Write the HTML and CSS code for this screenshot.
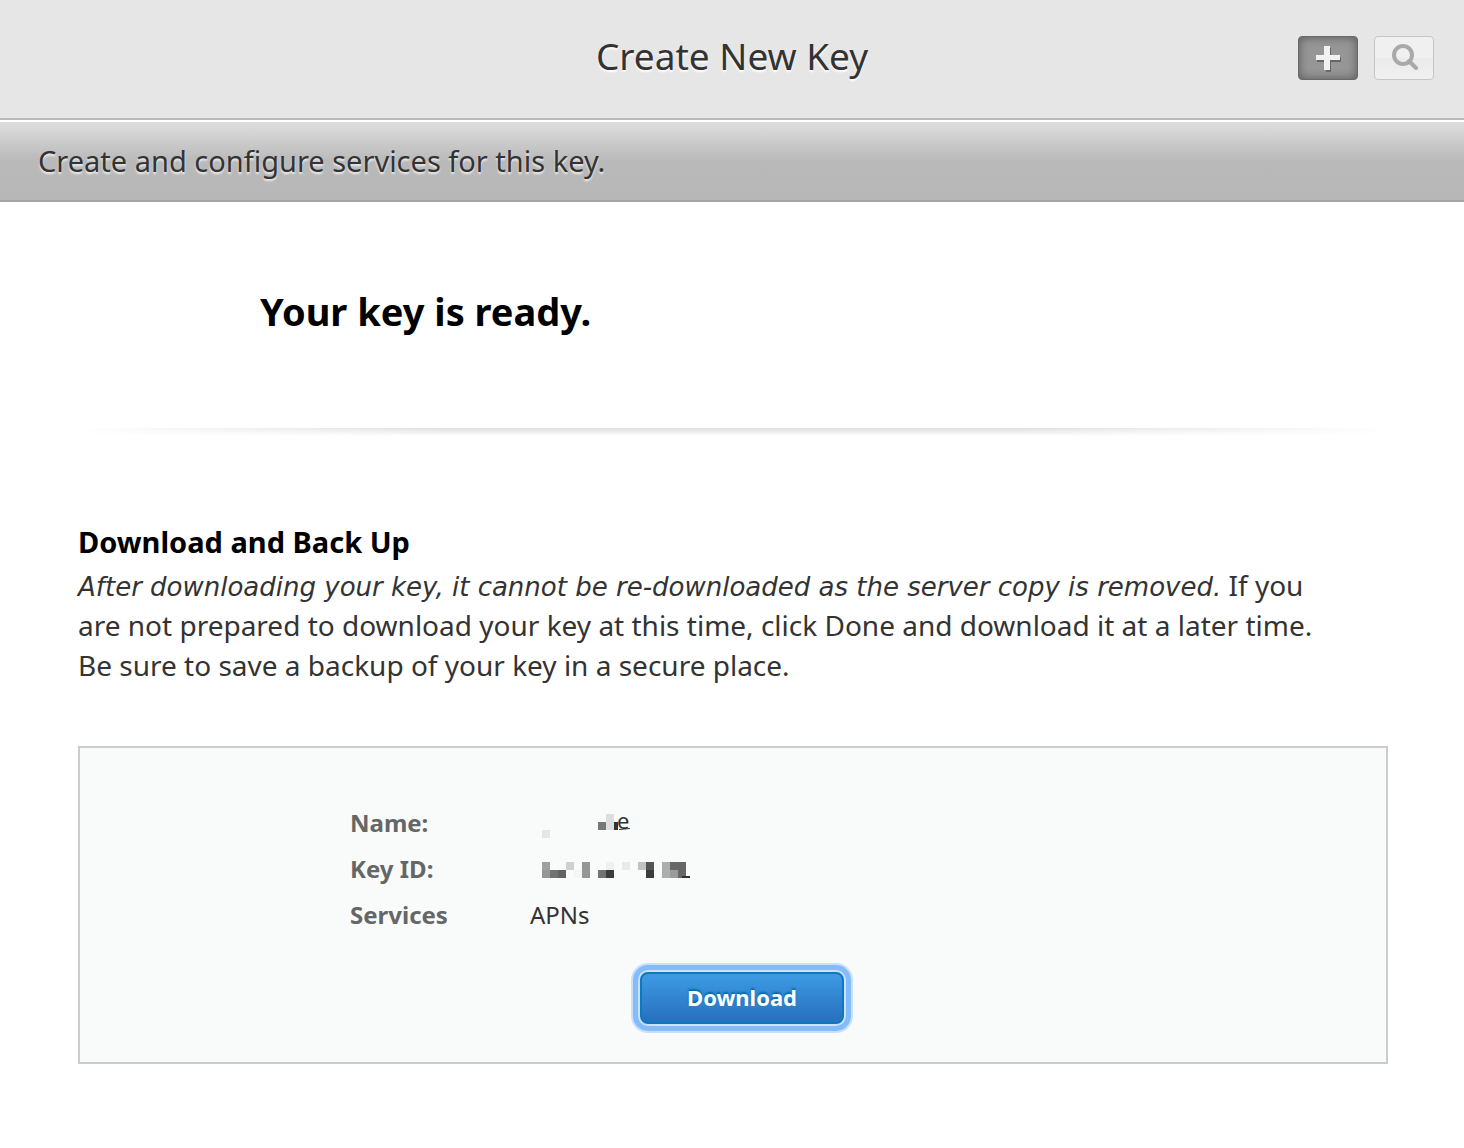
FILE: index.html
```html
<!DOCTYPE html>
<html lang="en">
<head>
<meta charset="utf-8">
<meta name="viewport" content="width=device-width, initial-scale=1">
<title>Create New Key</title>
<link rel="stylesheet" href="styles.css">
</head>
<body>
<header class="topbar">
  <h1 class="topbar-title">Create New Key</h1>
  <div class="topbar-actions">
    <button class="tool tool-add" type="button" aria-label="Add">
      <svg width="28" height="30" viewBox="0 0 28 30" aria-hidden="true">
        <path class="plus-shadow" d="M12 5h5v9h10v5H17v10h-5v-10H3v-5h9z"/>
        <path class="plus" d="M10 3h6v9h10v5H16v10h-6V17H2v-5h8z"/>
      </svg>
    </button>
    <button class="tool tool-search" type="button" aria-label="Search">
      <svg width="28" height="28" viewBox="0 0 28 28" aria-hidden="true">
        <circle cx="13" cy="11" r="9"/>
        <path d="M19 17l7 7"/>
      </svg>
    </button>
  </div>
</header>
<p class="subbar">Create and configure services for this key.</p>
<main class="content">
  <h2 class="ready">Your key is ready.</h2>
  <hr class="divider">
  <section>
    <h3 class="section-title">Download and Back Up</h3>
    <p class="note"><em>After downloading your key, it cannot be re-downloaded as the server copy is removed.</em> If you<br>are not prepared to download your key at this time, click Done and download it at a later time.<br>Be sure to save a backup of your key in a secure place.</p>
  </section>
  <section class="panel">
    <dl class="details">
      <dt>Name:</dt>
      <dd>
        <svg class="mosaic" width="160" height="26" viewBox="0 0 160 26">
          <path fill="#e5e6e6" d="M12 16h8v8h-8z"/>
          <path fill="#777" d="M68 8h8v8h-8z"/>
          <path fill="#dddede" d="M76 0h8v16h-8z"/>
          <path fill="#333" d="M84 8h4v8h-4zM89 15l11-1v1l-11 1z"/>
          <text x="87" y="15">e</text>
        </svg>
      </dd>
      <dt>Key ID:</dt>
      <dd>
        <svg class="mosaic" width="164" height="26" viewBox="0 0 164 26">
          <path fill="#a0a0a0" d="M12 2h8v8h-8z"/>
          <path fill="#969696" d="M12 10h8v8h-8zM52 2h8v16h-8z"/>
          <path fill="#727272" d="M20 10h8v8h-8zM68 10h8v8h-8z"/>
          <path fill="#636363" d="M28 10h8v8h-8z"/>
          <path fill="#cfd0d0" d="M36 2h8v8h-8z"/>
          <path fill="#f4f5f5" d="M44 10h8v8h-8z"/>
          <path fill="#3c3c3c" d="M76 10h8v8h-8zM116 10h8v8h-8z"/>
          <path fill="#eff0f0" d="M76 2h8v8h-8z"/>
          <path fill="#e9eaea" d="M92 2h8v8h-8z"/>
          <path fill="#c1c2c2" d="M108 2h8v8h-8z"/>
          <path fill="#545454" d="M116 2h8v8h-8z"/>
          <path fill="#adadad" d="M132 2h8v16h-8z"/>
          <path fill="#676767" d="M140 2h16v8h-16zM148 10h8v8h-8z"/>
          <path fill="#9b9b9b" d="M140 10h8v8h-8z"/>
          <path fill="#333" d="M152 16h8v2h-8z"/>
        </svg>
      </dd>
      <dt>Services</dt>
      <dd>APNs</dd>
    </dl>
    <button class="download" type="button">Download</button>
  </section>
</main>
</body>
</html>
```
FILE: styles.css
```css
* { box-sizing: border-box; }

body {
  margin: 0;
  background: #fff;
  color: #333;
  font-family: "Noto Sans", "Open Sans", sans-serif;
}

h1, h2, h3, p, dl, dd { margin: 0; }

.topbar {
  display: grid;
  grid-template-columns: 1fr auto 1fr;
  align-items: center;
  height: 120px;
  padding: 0 30px 2px;
  background: #e6e6e6;
  border-bottom: 2px solid #b9b9b9;
}

.topbar-title {
  grid-column: 2;
  padding-bottom: 4px;
  font-size: 37px;
  font-weight: 400;
  line-height: 48px;
  text-shadow: 0 2px 2px #fff;
}

.topbar-actions {
  display: flex;
  justify-content: flex-end;
  gap: 16px;
}

.tool {
  display: flex;
  align-items: center;
  justify-content: center;
  width: 60px;
  height: 44px;
  padding: 0;
  border-radius: 4px;
}

.tool-add {
  background: #969696;
  border: 1px solid #696969;
  box-shadow: inset 0 0 10px #555;
}

.plus { fill: #f1f1f1; }
.plus-shadow { fill: #666; }

.tool-search {
  background: linear-gradient(#f0f0f0 50%, #ebebeb 50%, #f0f0f0);
  border: 1px solid #c6c6c6;
}

.tool-search svg {
  fill: none;
  stroke: #a9a9a9;
  stroke-width: 4;
  stroke-linecap: round;
}

.subbar {
  height: 82px;
  padding: 0 38px;
  border-top: 2px solid #fff;
  border-bottom: 2px solid #a5a5a5;
  background: linear-gradient(#dedede, #b9b9b9 50%, #b7b7b7);
  font-size: 29px;
  line-height: 78px;
  text-shadow: 0 2px 2px #eee;
}

.content { padding: 84px 76px 84px 78px; }

.ready {
  padding-left: 182px;
  color: #000;
  font-size: 38px;
  font-weight: 700;
  line-height: 50px;
}

.divider {
  height: 8px;
  margin: 92px 0 88px;
  border: 0;
  background:
    linear-gradient(90deg, #fff, transparent 28%, transparent 72%, #fff),
    linear-gradient(#dfdfdf, #fff);
}

.section-title {
  color: #000;
  font-size: 29px;
  font-weight: 700;
  line-height: 36px;
}

.note {
  padding-top: 5px;
  font-size: 28px;
  line-height: 40px;
}

.note em {
  font-family: "DejaVu Sans", sans-serif;
  font-size: 26px;
  line-height: 1;
}

.panel {
  display: flow-root;
  margin-top: 61px;
  padding: 52px 40px 38px 270px;
  background: #f9fbfa;
  border: 2px solid #ccc;
}

.details {
  display: grid;
  grid-template-columns: 180px 1fr;
  grid-auto-rows: 46px;
  font-size: 24px;
  line-height: 46px;
}

.details dt { color: #666; font-weight: 700; }

.details dd { display: flex; align-items: center; }

.mosaic {
  margin-top: 8px;
  overflow: visible;
}

.mosaic text { fill: #333; font-size: 22px; }

.download {
  display: block;
  width: 204px;
  height: 52px;
  margin: 34px 0 0 290px;
  padding: 0 0 2px;
  border: 2px solid #0a7abf;
  border-radius: 8px;
  outline: 0;
  background: linear-gradient(#3d9be3, #2770be);
  box-shadow: 0 0 0 2px #cde2fa, 0 0 0 7px #84bcfb, 0 0 0 9px #c9e0fa;
  color: #fff;
  font-family: inherit;
  font-size: 22px;
  font-weight: 700;
  line-height: 46px;
  text-shadow: 0 -2px 2px #0068a8;
}
```
